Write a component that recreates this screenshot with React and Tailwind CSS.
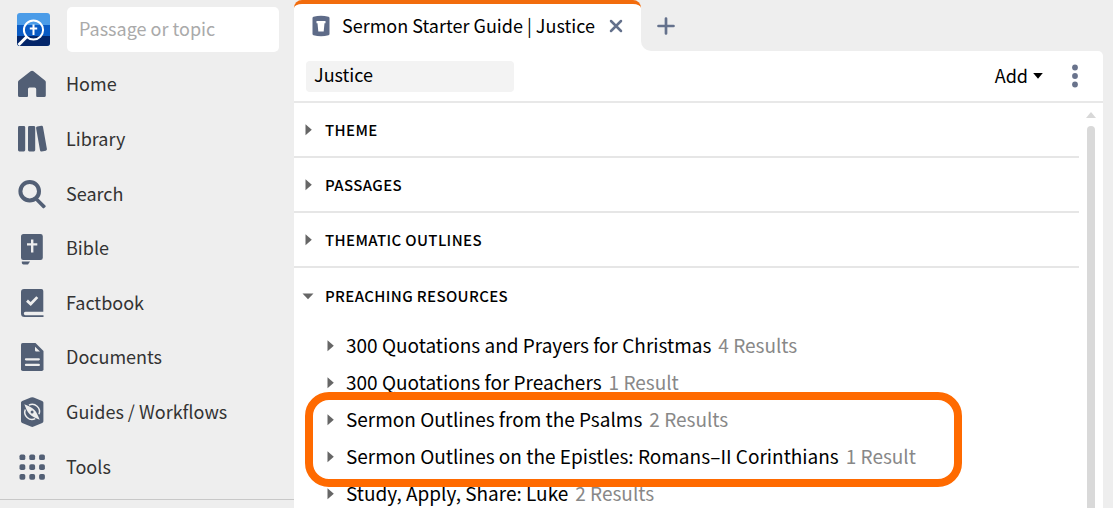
const Icon = ({ children }) => (
  <svg viewBox="0 0 36 36" className="size-9 shrink-0 text-[#525f75]" fill="currentColor" aria-hidden="true">
    {children}
  </svg>
);

const icons = {
  home: (
    <Icon>
      <path d="M16.6 5.3a2.3 2.3 0 0 1 2.9 0L31 14.4a1.8 1.8 0 0 1 .8 1.5V29.400a1.600 1.600 0 0 1-1.600 1.600H23.200a1 1 0 0 1-1-1V23a1.500 1.500 0 0 0-1.500-1.500h-5.200A1.500 1.500 0 0 0 14 23v7a1 1 0 0 1-1 1H5.600A1.600 1.600 0 0 1 4 29.400V15.900c0-.6.3-1.100.8-1.500z" />
    </Icon>
  ),
  library: (
    <Icon>
      <rect x="4" y="5" width="7.200" height="25.500" rx="1.400" />
      <rect x="14" y="5" width="7.200" height="25.500" rx="1.400" />
      <rect x="24" y="5" width="7" height="25.300" rx="1.400" transform="rotate(-10 27.500 17.600)" />
    </Icon>
  ),
  search: (
    <Icon>
      <circle cx="15.700" cy="15.200" r="9.300" fill="none" stroke="currentColor" strokeWidth="4" />
      <path d="M22 21.500l2.800 1.600 6.600 6.300a1 1 0 0 1 0 1.500l-1.200 1.200a1 1 0 0 1-1.500 0l-6.400-6.500-1.700-2.800z" />
    </Icon>
  ),
  bible: (
    <Icon>
      <path fillRule="evenodd" d="M9.500 4h17A2.300 2.300 0 0 1 28.800 6.300v21.400a2.300 2.300 0 0 1-2.300 2.300H9.200A2.200 2.200 0 0 1 7 27.800V6.500A2.500 2.500 0 0 1 9.500 4zM17 9.500v3.800h-4v2.200h4V22.600h2.400V15.500h3.900v-2.200h-3.900V9.500z" />
      <path d="M7.800 31.500h8.200l-2 3H9.600c-1.300 0-2-1.300-1.800-3z" />
    </Icon>
  ),
  factbook: (
    <Icon>
      <path d="M10 4h17.300A2 2 0 0 1 29.300 6v20.800H11.500a1.700 1.700 0 0 0 0 3.400H29.500V32H10.500A3.500 3.500 0 0 1 7 28.500V7a3 3 0 0 1 3-3z" />
      <path d="M13 15.600l3.700 3.400 6.600-6.900" fill="none" stroke="#eee" strokeWidth="2.800" />
    </Icon>
  ),
  documents: (
    <Icon>
      <path d="M8.600 4H21.500l8 8V30.200a1.800 1.800 0 0 1-1.800 1.800H8.800A1.800 1.800 0 0 1 7 30.200V5.600A1.600 1.600 0 0 1 8.600 4z" />
      <path d="M21 7.800v3.500a1.200 1.200 0 0 0 1.200 1.200h3.800zM12 19.200h12.800a.8.8 0 0 1 0 2.300H12a.8.8 0 0 1 0-2.300zM12 24.800h12.800a.8.8 0 0 1 0 2.300H12a.8.8 0 0 1 0-2.300z" fill="#eee" />
    </Icon>
  ),
  guides: (
    <Icon>
      <path d="M16.800 3.600a4 4 0 0 1 2.900 0l8.500 3.300a1.800 1.800 0 0 1 1.200 1.700v18.600a1.800 1.800 0 0 1-1.200 1.700l-8.500 3.700a4 4 0 0 1-2.900 0l-8.600-3.700A1.800 1.800 0 0 1 7 27.200V8.600a1.800 1.800 0 0 1 1.200-1.700z" />
      <g fill="none" stroke="#eee" strokeWidth="1.500">
        <path d="M14.900 11.200A7.300 7.300 0 0 1 25 20.300" />
        <path d="M11.300 15.500A7.300 7.300 0 0 0 21.300 24.700" />
      </g>
      <path fillRule="evenodd" d="M10.300 10.200c4 1.600 7.800 3.100 10.200 5.700 2.400 2.600 3.600 6.100 5.200 9.900-4-1.600-7.800-3.100-10.200-5.700-2.400-2.600-3.600-6.100-5.200-9.900zm7.800 6.300a1.500 1.500 0 1 0 0 3 1.500 1.500 0 0 0 0-3z" fill="#eee" />
    </Icon>
  ),
  tools: (
    <Icon>
      {[5.500, 15.300, 25.100].map((y) =>
        [5.500, 15.300, 25.100].map((x) => <rect key={`${x}-${y}`} x={x} y={y} width="5.800" height="5.600" rx="1.700" />)
      )}
    </Icon>
  ),
};

const navItems = [
  ['Home', icons.home],
  ['Library', icons.library],
  ['Search', icons.search],
  ['Bible', icons.bible],
  ['Factbook', icons.factbook],
  ['Documents', icons.documents],
  ['Guides / Workflows', icons.guides],
  ['Tools', icons.tools],
];

function Logo() {
  return (
    <svg viewBox="0 0 33 33" className="size-[33px] shrink-0" role="img" aria-label="Logo">
      <defs>
        <clipPath id="logo-clip">
          <rect width="33" height="33" rx="3" />
        </clipPath>
      </defs>
      <g clipPath="url(#logo-clip)">
        <rect width="33" height="33" fill="#4b9ce8" />
        <rect y="12" width="33" height="11" fill="#0a5bc4" />
        <rect y="23" width="33" height="10" fill="#04266a" />
        <circle cx="16.500" cy="17" r="9.600" fill="none" stroke="#fff" strokeWidth="2" />
        <path d="M10 23.500L1.500 32" stroke="#fff" strokeWidth="3" />
        <path d="M16.500 11.500v10.500M12.800 15.500h7.400" stroke="#fff" strokeWidth="2" />
      </g>
    </svg>
  );
}

function Sidebar() {
  return (
    <aside className="flex w-[294px] shrink-0 flex-col">
      <div className="flex items-center gap-[17px] pt-[7px] pl-[17px]">
        <Logo />
        <input
          type="text"
          aria-label="Passage or topic"
          placeholder="Passage or topic"
          className="h-[45px] w-[212px] rounded-[5px] bg-white px-3 pb-[3px] text-[18px] text-[#333] outline-none placeholder:text-[#aaa]"
        />
      </div>
      <nav className="grid flex-1 auto-rows-fr border-b border-[#c8c8c8] pt-[5px] pb-[5px]">
        {navItems.map(([label, icon]) => (
          <a key={label} href="#" className="flex items-center gap-4 pl-[14px] text-[18px] leading-6 text-[#333]">
            {icon}
            <span className="pb-[2px]">{label}</span>
          </a>
        ))}
      </nav>
      <div className="h-2" />
    </aside>
  );
}

function Arrow({ open }) {
  return (
    <svg viewBox="0 0 12 12" className="size-3 shrink-0 text-[#666]" fill="currentColor" aria-hidden="true">
      {open ? <path d="M.5 3.500h11L6 9.200z" /> : <path d="M3.500 .300v11L9.800 5.800z" />}
    </svg>
  );
}

function Section({ title, open }) {
  return (
    <h2>
      <button
        type="button"
        aria-expanded={!!open}
        className={`flex h-[55px] w-full items-center gap-[11px] pl-2 text-[15px] leading-5 font-medium text-black ${
          open ? '' : 'border-b-2 border-[#e6e6e6]'
        }`}
      >
        <Arrow open={open} />
        <span className="tracking-wide">{title}</span>
      </button>
    </h2>
  );
}

function Resource({ title, count }) {
  return (
    <button type="button" className="flex h-[37px] items-center gap-[10px] pl-[30px] text-[19px] leading-6 whitespace-nowrap text-black">
      <Arrow />
      <span className="flex gap-[7px] pb-[2px]">
        <span>{title}</span>
        <span className="text-[#888]">{count}</span>
      </span>
    </button>
  );
}

function TabBar() {
  return (
    <div className="flex h-[51px] bg-[#eee]">
      <div className="flex w-[347px] shrink-0 items-center rounded-t-lg border-t-4 border-[#f26c0d] bg-white pb-1 pl-[17px]">
        <svg viewBox="0 0 20 22" className="h-[22px] w-5 shrink-0" aria-hidden="true">
          <path d="M2.500 1.800Q10-.5 17.500 1.800q1 .3 1 1.200v16q0 .9-1 1.200Q10 22.500 2.500 20.200q-1-.3-1-1.200V3q0-.9 1-1.200z" fill="#5e6b88" />
          <path d="M5.500 6h9v2.200h-1L12.700 16.500H7.300L6.500 8.200h-1z" fill="#fff" />
        </svg>
        <span className="ml-[11px] pb-[2px] text-[18px] leading-6 whitespace-nowrap text-black">Sermon Starter Guide | Justice</span>
        <button type="button" aria-label="Close tab" className="ml-auto mr-[18px]">
          <svg viewBox="0 0 14 14" className="size-[14px]" stroke="#64718c" strokeWidth="2.500" strokeLinecap="round" aria-hidden="true">
            <path d="M2 2l10 10M12 2L2 12" />
          </svg>
        </button>
      </div>
      <div className="flex flex-1 bg-white">
        <div className="flex flex-1 items-center rounded-bl-[10px] bg-[#eee] pl-4">
          <button type="button" aria-label="New tab">
            <svg viewBox="0 0 18 18" className="size-[18px]" stroke="#64718c" strokeWidth="2.700" strokeLinecap="round" aria-hidden="true">
              <path d="M9 1.500v15M1.500 9h15" />
            </svg>
          </button>
        </div>
      </div>
    </div>
  );
}

function Toolbar() {
  return (
    <div className="flex h-[52px] items-center border-b-2 border-[#e8e8e8] pr-6 pl-3">
      <input
        type="text"
        aria-label="Topic"
        defaultValue="Justice"
        className="h-[31px] w-52 rounded-[4px] bg-[#f3f3f3] px-2 pb-[5px] text-[18px] text-black outline-none"
      />
      <button type="button" className="ml-auto flex items-center gap-[5px] text-[18px] leading-6 text-black">
        <span className="pb-[3px]">Add</span>
        <svg viewBox="0 0 10 6" className="h-[6px] w-[10px]" aria-hidden="true">
          <path d="M.2 0h9.600L5 5.700z" />
        </svg>
      </button>
      <button type="button" aria-label="More options" className="ml-7">
        <svg viewBox="0 0 8 24" className="h-6 w-2" fill="#69738c" aria-hidden="true">
          <circle cx="4" cy="3.500" r="2.900" />
          <circle cx="4" cy="12" r="2.900" />
          <circle cx="4" cy="20.500" r="2.900" />
        </svg>
      </button>
    </div>
  );
}

export default function App() {
  return (
    <div className="flex h-screen overflow-hidden bg-[#eee] font-['Noto_Sans_CJK_SC','Open_Sans',sans-serif]">
      <Sidebar />
      <main className="flex min-w-0 flex-1 flex-col pr-[10px]">
        <TabBar />
        <div className="flex min-h-0 flex-1 flex-col rounded-tr-[5px] bg-white">
          <Toolbar />
          <div className="flex min-h-0 flex-1">
            <div className="min-w-0 flex-1 overflow-hidden">
              <Section title="THEME" />
              <Section title="PASSAGES" />
              <Section title="THEMATIC OUTLINES" />
              <Section title="PREACHING RESOURCES" open />
              <div className="flex flex-col items-start pt-1">
                <Resource title="300 Quotations and Prayers for Christmas" count="4 Results" />
                <Resource title="300 Quotations for Preachers" count="1 Result" />
                <div className="relative flex flex-col items-start">
                  <Resource title="Sermon Outlines from the Psalms" count="2 Results" />
                  <Resource title="Sermon Outlines on the Epistles: Romans–II Corinthians" count="1 Result" />
                  <div className="pointer-events-none absolute -top-[9px] -right-[46px] -bottom-3 left-[11px] rounded-3xl border-8 border-[#ff6a00]" />
                </div>
                <Resource title="Study, Apply, Share: Luke" count="2 Results" />
              </div>
            </div>
            <div className="flex w-6 flex-col items-center gap-2 pt-[9px]" aria-hidden="true">
              <svg viewBox="0 0 10 6" className="h-[6px] w-[10px]" fill="#d8d8d8">
                <path d="M5 0l5 6H0z" />
              </svg>
              <div className="w-2 flex-1 rounded-t bg-[#d9d9d9]" />
            </div>
          </div>
        </div>
      </main>
    </div>
  );
}
